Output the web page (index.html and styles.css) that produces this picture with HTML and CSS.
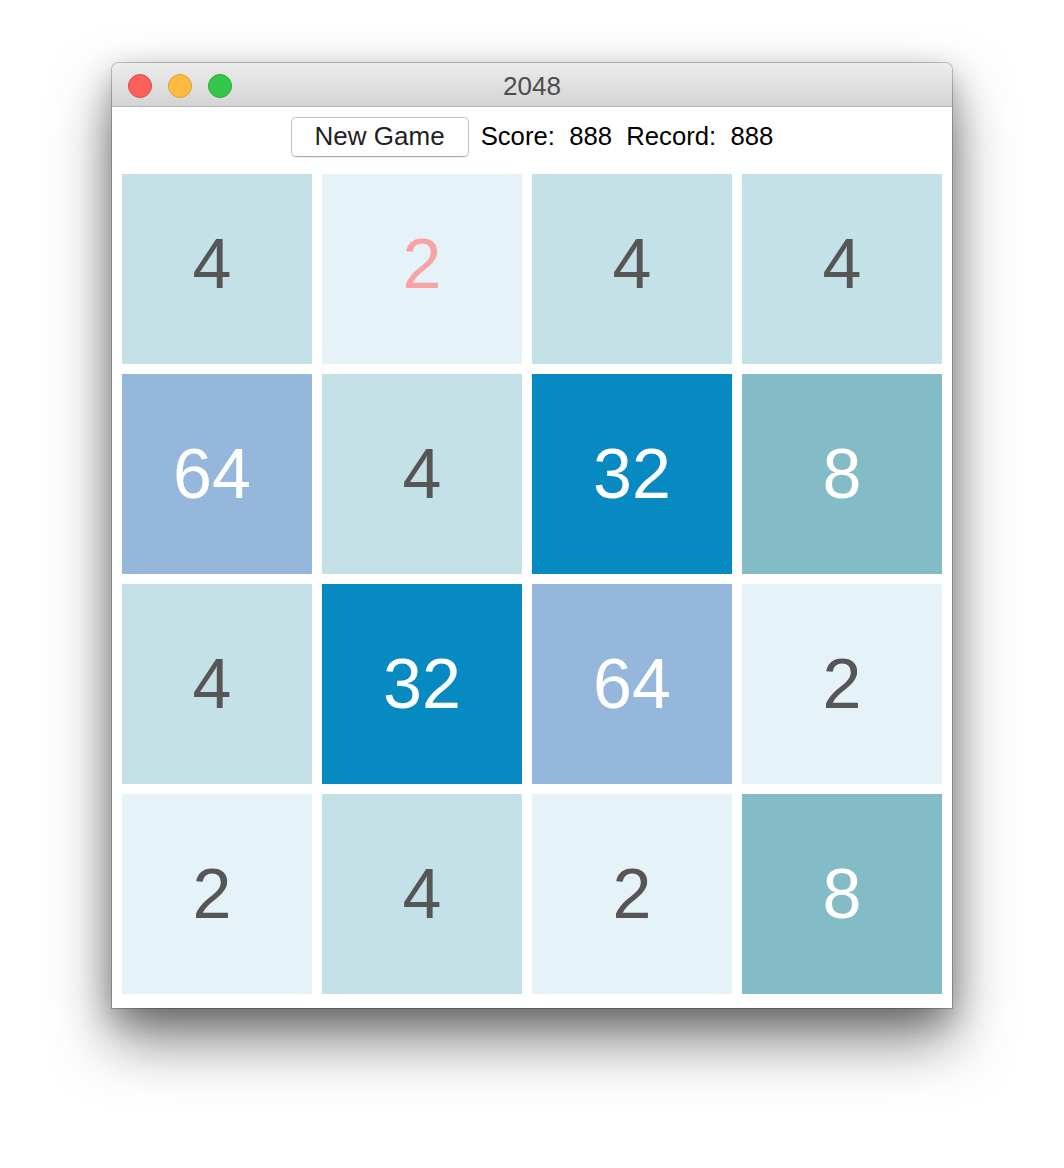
FILE: index.html
```html
<!DOCTYPE html>
<html>
	<head>
		<meta charset="utf-8" />
		<title>2048</title>
		<link rel="stylesheet" href="styles.css">
	</head>
	<body>
		<div class="window">
			<div class="titlebar">
				<div class="lights">
					<span class="light red"></span>
					<span class="light yellow"></span>
					<span class="light green"></span>
				</div>
				<div class="title">2048</div>
			</div>
			<div class="toolbar">
				<button class="btn">New Game</button>
				<span class="score">Score:  888  Record:  888</span>
			</div>
			<div class="board-clip">
				<div class="board">
					<div class="tile t4">4</div>
					<div class="tile t2 pink">2</div>
					<div class="tile t4">4</div>
					<div class="tile t4">4</div>

					<div class="tile t64">64</div>
					<div class="tile t4">4</div>
					<div class="tile t32">32</div>
					<div class="tile t8">8</div>

					<div class="tile t4">4</div>
					<div class="tile t32">32</div>
					<div class="tile t64">64</div>
					<div class="tile t2">2</div>

					<div class="tile t2">2</div>
					<div class="tile t4">4</div>
					<div class="tile t2">2</div>
					<div class="tile t8">8</div>
				</div>
			</div>
		</div>
	</body>
</html>
```

FILE: styles.css
```css
* {
	padding: 0;
	margin: 0;
	box-sizing: border-box;
}

html, body {
	background-color: #fff;
}

body {
	font-family: "Liberation Sans", Arial, sans-serif;
	padding: 63px 0 0 112px;
	min-height: 1168px;
}

.window {
	width: 840px;
	background: #fff;
	border-radius: 7px 7px 0 0;
	padding-bottom: 14px;
	box-shadow: 0 0 0 1px rgba(0,0,0,0.22), 0 32px 60px rgba(0,0,0,0.5), 0 10px 30px rgba(0,0,0,0.25);
}

.titlebar {
	height: 44px;
	position: relative;
	display: flex;
	align-items: center;
	justify-content: center;
	background: linear-gradient(#ececec, #d4d4d4);
	border-bottom: 1px solid #b5b5b5;
	border-radius: 7px 7px 0 0;
}

.lights {
	position: absolute;
	left: 16px;
	top: 11px;
	display: flex;
	gap: 16px;
}

.light {
	width: 24px;
	height: 24px;
	border-radius: 50%;
	display: block;
}

.red { background: #fc605c; border: 1px solid #de4a45; }
.yellow { background: #fdbc40; border: 1px solid #dea135; }
.green { background: #34c84a; border: 1px solid #27aa37; }

.title {
	font-size: 26px;
	color: #4d4d4d;
	padding-top: 3px;
}

.toolbar {
	height: 67px;
	display: flex;
	align-items: center;
	justify-content: center;
	gap: 12px;
	padding-bottom: 8px;
}

.btn {
	width: 178px;
	height: 40px;
	font-family: "Liberation Sans", Arial, sans-serif;
	font-size: 26px;
	color: #222;
	background: #fff;
	border: 1px solid #c4c4c4;
	border-bottom-color: #adadad;
	border-radius: 5px;
	box-shadow: 0 1px 1px rgba(0,0,0,0.08);
}

.score {
	font-size: 25.7px;
	color: #000;
	white-space: pre;
}

.board-clip {
	overflow: hidden;
	margin: 0 10px;
	height: 820px;
}

.board {
	display: grid;
	grid-template-columns: repeat(4, 200px);
	grid-template-rows: repeat(4, 200px);
	gap: 10px;
	margin: -10px 0 0 -10px;
}

.tile {
	display: flex;
	align-items: center;
	justify-content: center;
	font-size: 70px;
	color: #565656;
}

.t2 { background: #e5f3f8; }
.t4 { background: #c5e1e8; }
.t8 { background: #83bcc7; color: #fff; }
.t32 { background: #0789c2; color: #fff; }
.t64 { background: #94b7db; color: #fff; }
.pink { color: #f9a4a4; }
```
